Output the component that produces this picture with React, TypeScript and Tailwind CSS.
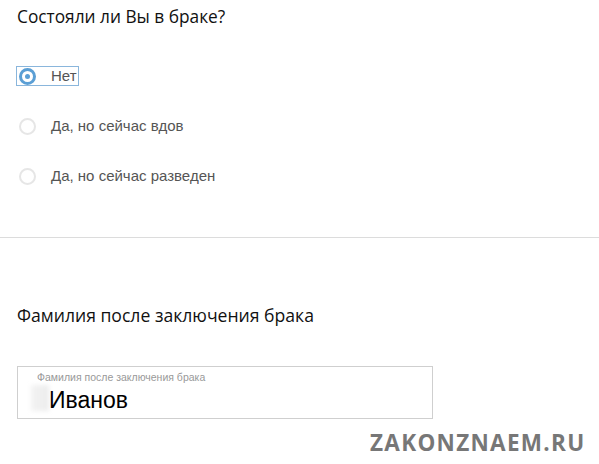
const options = ["Нет", "Да, но сейчас вдов", "Да, но сейчас разведен"];

function Radio({ label, checked }: { label: string; checked?: boolean }) {
  return (
    <div className="flex h-[20px] items-center">
      <div
        className={`flex items-center pr-[1px] ${
          checked ? "outline outline-1 outline-[#8ab6dc]" : ""
        }`}
      >
        <span
          className={`ml-[2px] flex h-[17px] w-[17px] items-center justify-center rounded-full ${
            checked ? "border-[3px] border-[#5b9fd5]" : "border-2 border-[#e6e6e6]"
          }`}
        >
          {checked && <span className="h-[5px] w-[5px] rounded-full bg-[#5b9fd5]" />}
        </span>
        <span className="ml-[15px] text-[15px] leading-[18px] text-[#555]">{label}</span>
      </div>
    </div>
  );
}

export default function App() {
  return (
    <div className="relative h-[464px] w-[599px] overflow-hidden bg-white font-['Liberation_Sans',Arial,sans-serif]">
      <div className="px-[17px] pt-[5px]">
        <h2 className="font-['Open_Sans',sans-serif] text-[17.3px] leading-[23px] text-[#111]">
          Состояли ли Вы в браке?
        </h2>
        <div className="mt-[38px] flex flex-col gap-[30px]">
          {options.map((o, i) => (
            <Radio key={o} label={o} checked={i === 0} />
          ))}
        </div>
      </div>
      <div className="mt-[51px] h-px w-full bg-[#dcdcdc]" />
      <div className="px-[17px] pt-[66px]">
        <h2 className="font-['Open_Sans',sans-serif] text-[17.6px] leading-[23px] text-[#111]">
          Фамилия после заключения брака
        </h2>
        <div className="mt-[39px] h-[53px] w-[416px] border border-[#cfcfcf] pl-[19px] pt-[4px]">
          <div className="text-[10.5px] leading-[12px] text-[#999]">Фамилия после заключения брака</div>
          <div className="relative mt-[5px] flex items-center">
            <span className="absolute left-[-6px] top-[-3px] h-[26px] w-[18px] bg-gradient-to-r from-[#f3f3f3] to-[#ececec] blur-[2px]" />
            <span className="relative pl-[12px] text-[23px] leading-[24px] text-black">Иванов</span>
          </div>
        </div>
      </div>
      <div className="absolute left-[370px] top-[428px] font-['Open_Sans',sans-serif] text-[22.5px] font-bold leading-[30px] tracking-[1.3px] text-[#777]">
        ZAKONZNAEM.RU
      </div>
    </div>
  );
}
